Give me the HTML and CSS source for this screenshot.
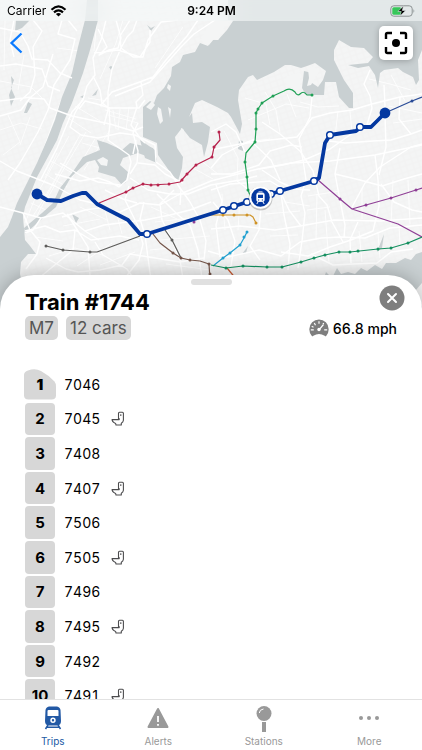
FILE: index.html
```html
<!DOCTYPE html>
<html lang="en">
<head>
<meta charset="utf-8">
<meta name="viewport" content="width=device-width, initial-scale=1">
<title>Train #1744</title>
<link rel="stylesheet" href="styles.css">
</head>
<body>
<svg class="defs" aria-hidden="true">
  <symbol id="toilet" viewBox="0 0 14 15">
    <path d="M7.500 8V2.200Q7.500 1.200 8.500 1.200H11.400Q12.400 1.200 12.400 2.200V9.200Q12.200 11 10.300 12.200V14H5L4.600 12.400Q2.200 11.600 1.600 10M.6 8.600H8.200V7.200M1 8.800Q1.500 10.600 2.600 11.300M9.800 3.300V5" fill="none" stroke="#4c4c4e" stroke-width="1.100" stroke-linejoin="round"/>
  </symbol>
</svg>
<div class="app">
  <section class="map" aria-label="Route map">
    <svg class="map-art" viewBox="0 0 422 320" preserveAspectRatio="xMidYMin slice" aria-hidden="true">
      <defs>
        <pattern id="streets" width="13" height="11" patternUnits="userSpaceOnUse" patternTransform="rotate(-18)">
          <path d="M0 3H13M0 8H13M4 0V11M10 0V11" stroke="#f0f1f1" stroke-width=".7"/>
        </pattern>
      </defs>
      <rect width="422" height="320" fill="#f4f5f5"/>
      <rect width="422" height="320" fill="url(#streets)"/>
      <g class="roads minor">
        <path d="M77 140L45 197 33 216M69 136L36 196 25 223M57 153L45 178M51 161L74 174M45 174L67 187M37 188L55 202M31 203L46 210M86 132L62 172 45 203M95 139L70 181M80 135L50 190 37 216M110 130L84 170M82 143L100 148M5 20L4 70M0 81L31 87 43 99M24 55L18 90M57 48L80 51M0 130L21 123 42 129M8 115L20 142 3 155M30 117L20 145M60 103L42 153M65 104L47 149M68 118L91 133M75 106L100 121M97 20L94 51M123 20L116 43 100 79M88 98L107 101M113 110L116 129M120 109L118 130M129 107L126 130M105 110L136 119M108 115L138 123M183 27L166 52 155 68"/>
        <path d="M245 98L266 104 270 125M248 120L286 104 309 108M265 92L276 110 280 133M287 94L296 117M300 102L318 107 339 106M338 111L335 137M350 111L352 133M391 75L405 101M369 79L390 84 411 90M389 106L422 113M393 123L422 119M308 196L340 191M307 210L330 207M285 202L310 206M222 194L225 230M240 198L238 230M265 214L300 211M270 236L298 235M317 194L316 240M325 210L329 263M362 189L362 219M393 180L391 225M408 180L410 224M359 231L362 262M378 233L380 258M399 225L400 245M246 142L270 139M224 131L238 158 237 181M193 168L213 179M200 160L218 174M104 207L110 230M116 211L122 234M80 207L107 220M63 226L100 219M35 237L63 241M49 256L75 248 103 255M77 266L112 243M100 265L135 252M151 207L188 224M155 222L190 218M160 240L210 236M150 250L170 248M166 264L210 270"/>
      </g>
      <g fill="#c9d0d2">
        <path d="M87 0L85 20 78 47 72 73 62 97 55 120 47 140 37 163 27 183 17 203 12 217 8 227 0 237V320H30L20 274 21 262 28 254 36 254 30 246 25 240 23 217 25 207 37 177 50 153 57 140 63 123 72 103 83 73 90 50 98 20V0Z"/>
        <path d="M228 20L233 21 227 30 218 40 212 40 208 46 200 43 195 52 183 55 180 62 172 67 171 76 164 88 157 95 154 103 150 101 143 107 143 137 157 143 158 155 170 172 178 181 182 168 183 157 177 148 175 137 182 128 190 138 202 145 204 157 208 142 210 127 202 122 193 123 192 113 189 117 195 103 202 100 217 107 228 113 231 117 238 130 240 134 242 124 238 100 239 90 248 77 253 75 257 80 274 72 285 65 291 65 301 68 307 66 315 63 326 71 323 80 318 87 312 83 312 73 304 71 302 88 306 95 314 95 324 95 325 82 336 82 339 97 349 108 353 108 353 93 344 80 334 60 334 50 339 40 351 47 364 48 373 57 368 63 348 65 358 68 369 66 375 75 378 88 380 73 384 70 398 68 403 72 413 77 416 85 419 80 418 60 422 50V0H228Z"/>
        <path d="M44 217L25 234 24 228 42 213 53 203 60 188 72 173 83 157 100 150 97 140 107 143 122 150 130 143 153 148 157 160 138 153 123 158 120 165 128 172 126 182 122 185 115 177 98 172 99 167 95 160 87 162 71 177 63 191 56 207Z"/>
        <path d="M140 140L155 150 157 163 145 158Z M111 66L109 67 111 70 113 67Z M147 25L151 28 155 26 151 31Z M92 96L98 89 96 95Z M80 97L84 95 83 98Z M28 102L32 104 27 113 24 113Z M16 20L24 20 30 20 22 28 15 31Z M11 76L14 80 11 88 15 97 11 106 9 95 12 87Z M72 214L79 218 76 223Z M242 254L248 246 246 253Z M239 140L243 141 243 151 238 149Z M377 252L384 234 382 248Z"/>
        <path d="M320 290L326 272 332 278 337 268 341 274 348 272 355 274 361 268 367 271 375 265 382 269 386 263 396 263 405 258 411 260 416 254 422 252V320H325Z"/>
      </g>
      <g fill="#f4f5f5">
        <path d="M211 20H234L226 24 218 40 214 39 209 45 200 40Z"/>
        <path d="M163 75L166 77 165 84 162 82Z M168 84L171 86 170 91 167 88Z M158 107L161 109 163 121 160 124 157 114Z M152 101L155 105 151 110 146 107Z M181 128L184 130 184 142 180 140Z M168 107L171 109 170 118Z M287 76L300 72 300 89 290 87 285 82Z M308 69L314 66 318 73 311 85 307 86 309 78Z M97 160L103 157 108 160 107 166 101 165Z M408 299L422 283V306Z"/>
      </g>
      <g class="roads">
        <path d="M0 28L20 32 28 46 32 59 48 60 60 73 72 78M14 20L10 40 14 57M33 20L42 31 33 47 35 75 30 92 20 101M62 20L58 34 75 39 70 60 54 85 48 110 38 132 20 163 8 180M0 66L16 64 42 69 48 86 60 91M53 54L43 87 31 97 0 101M0 116L21 110 30 98 44 99 50 108 72 116 110 124 133 131 143 127M68 20L77 31M106 20L101 40 93 58 95 75 87 86 83 100 72 112 57 148 40 181"/>
        <path d="M116 20L121 38 118 48 109 50 99 55 107 47 98 29M130 20L120 36 121 48 133 57 143 57 148 40 161 22 178 20M94 53L118 50 140 57 150 42 150 30M137 20L133 31 127 37 121 48 112 69 108 92 108 110 104 125M198 20L187 36 166 60 153 77 137 83 112 92 100 106M215 20L194 34 181 47 165 65 150 82 130 90 115 96M141 82L143 95 136 102 137 107 131 125 140 138 145 143M145 100L139 108 110 108 97 104 85 101 79 109"/>
        <path d="M93 76L100 90 102 103 109 108 110 124 108 140 129 155 131 162 127 180 119 187 110 182 98 178 80 181 55 174M84 97L75 113 70 127 81 135 98 138 120 133 135 135 155 145 156 162 170 172 181 190 180 205M138 123L133 133 138 151 137 163 130 174M138 163L155 165 165 174 183 183M60 163L80 175 98 182 120 185M0 161L17 171 35 178 55 186 80 200 97 204M0 207L23 213 41 218 63 213 85 231 99 240"/>
        <path d="M23 213L30 230 40 242 37 254 26 269M25 231L45 226 60 232 75 230 91 240 120 236 139 240M41 218L33 230 25 233M46 258L66 269 78 272 100 270 122 265 130 254 149 257 180 262 204 258M67 214L78 231 88 247 90 275M75 230L73 250 56 264 39 278M95 242L103 255 127 269 134 279M130 178L148 190 170 194 188 194 211 185 240 180 257 176"/>
        <path d="M85 231L104 225 128 222 145 220 170 215 190 210 211 202M62 217L85 210 99 208 120 212 140 203 160 205 178 195 211 181 234 175 258 169 291 163 330 161 375 155 422 145M144 202L140 219 145 235 148 258 151 280M174 190L160 204 162 220 172 240 180 260 183 279M178 185L190 202 200 220 206 241 204 260M157 194L177 214 190 225 198 250 202 278M129 186L125 200 138 226 143 244 139 260 125 278"/>
        <path d="M211 190L230 184 246 183 270 181 280 187 284 215 290 244 288 270M211 229L240 226 275 230 300 226 334 220 380 221 422 218M208 251L228 257 259 250 281 256 300 242 321 238 341 237 365 238 390 228 422 225M281 252L308 256 330 247 351 240 373 231 379 206 378 180 375 155M211 150L240 144 270 140 297 137 312 118 330 113 352 110 372 104 400 97 422 94M262 122L280 134 300 151 313 171 319 196 327 205 332 222 343 242M259 169L283 165 304 160 330 149 350 135 363 128 381 116 385 106 384 85"/>
        <path d="M312 97L310 117 299 139 303 160 306 180 301 196 305 213 302 241 298 268M329 141L345 143 373 141 391 140 411 134 422 130M340 148L335 174 340 200 345 225 344 238M351 209L365 183 380 167 411 147 422 144M211 168L222 155 241 145 255 139M211 174L232 174 259 165 270 151 291 145 302 147M216 185L222 201 216 225 220 257M237 181L252 192 261 208 259 230 250 246 260 260M281 193L289 210 301 226M262 170L280 182 295 189 310 190M335 174L360 180 382 186 404 179 422 174"/>
        <path d="M311 254L333 265 354 264 377 263 391 252 413 249M358 222L350 240 351 263M381 184L394 202 412 210 422 212M400 97L399 119 411 134M370 70L364 84 370 96 372 108 366 128M385 115L386 147 379 175M211 132L226 124 236 132 245 152M252 142L271 160 280 180M213 202L228 220 235 241 231 266M136 140L133 154M105 190L123 199 137 203"/>
      </g>
      <g class="line">
        <g stroke="#b7234d"><path d="M99 203L126 192 133 188 143 184 151 185 169 184 180 182 187 174 196 165 212 157 214 147 220 140 219 132"/><path class="stops" d="M126 192h0M133 188h0M143 184h0M151 185h0M158 185h0M169 184h0M182 180h0M187 174h0M196 165h0M212 157h0M214 147h0M219 132h0"/></g>
        <g stroke="#20a056"><path d="M313 95L307 95C304 91 302 92 300 94S296 94 295 92C291 88 287 89 284 91L273 96 262 103 258 109 256 113 256 129 255 142 246 153 245 162 247 177 248 190 251 198"/><path class="stops" d="M312 95h0M273 96h0M262 103h0M258 109h0M256 113h0M256 129h0M255 142h0M245 162h0M247 177h0M248 190h0"/></g>
        <g stroke="#5d5c5a"><path d="M46 246L63 250 90 252 97 252 140 236M165 230L172 240 181 258"/><path class="stops" d="M46 246h0M63 250h0M90 252h0M172 240h0"/></g>
        <g stroke="#75564a"><path d="M153 234L160 243 173 253 181 258 190 260 200 261 209 264 210 280"/><path class="stops" d="M173 253h0M181 258h0M190 260h0M209 264h0M210 274h0"/></g>
        <g stroke="#cf9327"><path d="M208 215L250 215 253 217 256 223"/><path class="stops" d="M223 215h0M234 215h0M247 215h0M256 223h0"/></g>
        <g stroke="#20a0d0"><path d="M247 232L244 238 240 245 230 253 223 258 213 266"/><path class="stops" d="M247 232h0M244 237h0M240 245h0M230 253h0M223 258h0"/></g>
        <g stroke="#8f3f96"><path d="M318 180L340 199 352 209 366 205 391 198 416 190 422 188M352 209L398 224 422 237"/><path class="stops" d="M340 199h0M366 205h0M391 198h0M416 190h0M194 222h0"/></g>
        <g stroke="#c85a32"><path d="M227 268L237 280"/></g>
        <g stroke="#159060"><path d="M211 265L226 268 243 266 267 267 282 267 301 262 314 258 325 255 339 252 350 252 378 249 391 248 408 243 422 237"/><path class="stops" d="M226 268h0M243 266h0M267 267h0M282 267h0M301 262h0M314 258h0M325 255h0M339 252h0M350 252h0M358 251h0M378 249h0M391 248h0M408 243h0"/></g>
        <g stroke="#294b97"><path d="M385 113L412 101 422 97"/><path class="stops" d="M412 101h0"/></g>
      </g>
      <path class="trip" d="M37 194L47 200 61 201 73 196 82 193H86L97 204 128 220 140 234 147 234 223 210 247 202 280 191 314 181 319 178 325 143 330 135 356 131 361 127 371 127 385 113"/>
      <g fill="#0438a0"><circle cx="37" cy="194" r="5.4"/><circle cx="385" cy="113" r="5.4"/></g>
      <g fill="#fff" stroke="#0438a0" stroke-width="1.5"><circle cx="147" cy="234" r="3.3"/><circle cx="223" cy="210" r="3.3"/><circle cx="234" cy="206" r="3.3"/><circle cx="247" cy="202" r="3.3"/><circle cx="271" cy="194" r="3.3"/><circle cx="280" cy="191" r="3.3"/><circle cx="314" cy="181" r="3.3"/><circle cx="330" cy="135" r="3.3"/><circle cx="360" cy="127" r="3.3"/></g>
      <circle cx="260.500" cy="198.500" r="12" fill="#0003"/>
      <circle cx="260.500" cy="197.500" r="11.300" fill="#fff"/>
      <circle cx="260.500" cy="197.500" r="9.300" fill="#0438a0"/>
      <path d="M258.500 191.800H262.500M256.800 194.500Q256.800 193 258 193H263Q264.200 193 264.200 194.500V200Q264.200 201.500 263 201.500H258Q256.800 201.500 256.800 200Z" fill="#fff" stroke="#fff" stroke-width=".8"/>
      <path d="M258 202L256.800 204M263 202L264.200 204" stroke="#fff" stroke-width="1"/>
      <path d="M258 194.800H263V198H258ZM258 199.400H259.200V200.400H258ZM261.800 199.400H263V200.400H261.800Z" fill="#0438a0"/>
    </svg>
    <header class="status">
      <span class="carrier">Carrier
        <svg width="17" height="12" viewBox="0 0 17 12" aria-label="Wi-Fi"><g fill="none" stroke="#000" stroke-width="2.200"><path d="M1.500 4.700Q8.500-1.800 15.500 4.700M4 7.400Q8.500 3.300 13 7.400"/></g><path d="M8.500 11.500L5.900 8.900Q8.500 6.900 11.100 8.900Z"/></svg>
      </span>
      <time>9:24 PM</time>
      <span class="battery"><svg width="26" height="12" viewBox="0 0 26 12" aria-label="Charging"><rect x=".8" y=".8" width="21.400" height="10.400" rx="3" fill="none" stroke="#8b9192"/><rect x="2.300" y="2.300" width="9" height="7.400" rx="1.500" fill="#36c759"/><path d="M23.500 4Q25.200 6 23.500 8Z" fill="#8b9192"/><path d="M13.500 1L7.800 6.500H11.200L10 11 15.700 5.500H12.300Z" stroke="#dfe6e5" stroke-width=".6"/></svg></span>
    </header>
    <div class="map-tools">
      <button class="back" aria-label="Back"><svg width="14" height="22" viewBox="0 0 14 22"><path d="M12.500 1.500L2.500 11 12.500 20.500" fill="none" stroke="#0a7aff" stroke-width="2.300"/></svg></button>
      <button class="locate" aria-label="Center on train"><svg width="24" height="24" viewBox="0 0 24 24"><path d="M2 8V3.500Q2 2 3.500 2H8M16 2H20.500Q22 2 22 3.500V8M22 16V20.500Q22 22 20.500 22H16M8 22H3.500Q2 22 2 20.500V16" fill="none" stroke="#000" stroke-width="2.400"/><circle cx="12" cy="12" r="4"/></svg></button>
    </div>
  </section>
  <main class="sheet">
    <div class="grip"></div>
    <div class="head">
      <h1>Train #1744</h1>
      <button class="close" aria-label="Close"><svg width="26" height="26" viewBox="0 0 26 26"><circle cx="13" cy="13" r="12.500" fill="#7e7e7e"/><path d="M9 9L17 17M17 9L9 17" stroke="#fff" stroke-width="2" stroke-linecap="round"/></svg></button>
    </div>
    <div class="facts">
      <span class="chip">M7</span><span class="chip">12 cars</span>
      <span class="speed"><svg width="20" height="18" viewBox="0 0 20 18" aria-hidden="true"><path d="M3 17.300Q.3 14.300.3 10.200A9.700 9.700 0 0 1 19.700 10.200Q19.700 14.300 17 17.300Q16.300 17.500 15.700 16.800Q10 13.200 4.300 16.800Q3.700 17.500 3 17.300Z" fill="#7e7e7e"/><path d="M10 2.200V4.800M5.300 4L6.500 6.200M14.700 4L13.800 5.600M2.700 7.300L4.500 8.200M1.800 10.800H4.800M15.200 10.800H18.200M10 10.800L14.500 5.500" stroke="#fff" stroke-width="1.200"/><circle cx="10" cy="10.500" r="1.700" fill="#fff"/></svg>66.8 mph</span>
    </div>
    <ol class="cars">
      <li><span class="pos lead"><svg viewBox="0 0 32 32" preserveAspectRatio="none" aria-hidden="true"><path d="M0 6Q0 3 4 1.500Q11-1 17 2Q25 6.500 30.500 13Q32 15 32 18V27Q32 31.500 27.500 31.500H4.500Q0 31.500 0 27Z" fill="#d7d7d7"/></svg><b>1</b></span>7046</li>
      <li><span class="pos">2</span>7045<svg class="wc" aria-label="Restroom"><use href="#toilet"/></svg></li>
      <li><span class="pos">3</span>7408</li>
      <li><span class="pos">4</span>7407<svg class="wc" aria-label="Restroom"><use href="#toilet"/></svg></li>
      <li><span class="pos">5</span>7506</li>
      <li><span class="pos">6</span>7505<svg class="wc" aria-label="Restroom"><use href="#toilet"/></svg></li>
      <li><span class="pos">7</span>7496</li>
      <li><span class="pos">8</span>7495<svg class="wc" aria-label="Restroom"><use href="#toilet"/></svg></li>
      <li><span class="pos">9</span>7492</li>
      <li><span class="pos">10</span>7491<svg class="wc" aria-label="Restroom"><use href="#toilet"/></svg></li>
    </ol>
  </main>
  <nav class="tabs">
    <a class="active" href="#trips"><svg width="28" height="28" viewBox="0 0 28 28" aria-hidden="true"><path fill="currentColor" fill-rule="evenodd" d="M10 2.500H18Q21 3 21.500 6L22 17Q22 21 18.500 21.500H9.500Q6 21 6 17L6.500 6Q7 3 10 2.500ZM8.500 7V12H19.500V7Q19.500 6 18.500 6H9.500Q8.500 6 8.500 7ZM14 13.500A2.700 2.700 0 1 0 14 18.900A2.700 2.700 0 1 0 14 13.500ZM14 15A1.200 1.200 0 1 1 14 17.400A1.200 1.200 0 1 1 14 15Z"/><path d="M9 21L6.500 25M19 21L21.500 25M8 23.300H20" stroke="currentColor" stroke-width="1.500"/></svg>Trips</a>
    <a href="#alerts"><svg width="28" height="28" viewBox="0 0 28 28" aria-hidden="true"><path d="M14 5L23.500 23H4.500Z" fill="currentColor" stroke="currentColor" stroke-width="2" stroke-linejoin="round"/><path d="M14 12V18M14 20V21.700" stroke="#fff" stroke-width="1.800"/></svg>Alerts</a>
    <a href="#stations"><svg width="28" height="28" viewBox="0 0 28 28" aria-hidden="true"><circle cx="14" cy="9.500" r="7.500" fill="currentColor"/><path d="M12 18H16V28H12Z" fill="currentColor"/><path d="M9.300 9Q9.500 5.500 13.500 5" fill="none" stroke="#fff" stroke-width="1"/></svg>Stations</a>
    <a href="#more"><svg width="28" height="28" viewBox="0 0 28 28" aria-hidden="true"><g fill="currentColor"><circle cx="6" cy="14" r="2"/><circle cx="14" cy="14" r="2"/><circle cx="22" cy="14" r="2"/></g></svg>More</a>
  </nav>
</div>
</body>
</html>
```
FILE: styles.css
```css
* { box-sizing: border-box; }
body { margin: 0; background: #fff; color: #000; font-family: Inter, "Liberation Sans", sans-serif; }
button { margin: 0; padding: 0; border: 0; background: none; }
svg { display: block; }
.defs { display: none; }
.app { display: flex; flex-direction: column; height: 100vh; overflow: hidden; }

.map { position: relative; flex: none; height: 320px; background: #f4f5f5; }
.map-art { position: absolute; inset: 0; width: 100%; height: 100%; }
.roads { fill: none; stroke: #fff; stroke-width: 1.4; stroke-linejoin: round; }
.minor { stroke-width: 1; opacity: .8; }
.line { fill: none; stroke-width: 1.2; stroke-linejoin: round; }
.stops { stroke-width: 3; stroke-linecap: round; }
.trip { fill: none; stroke: #0438a0; stroke-width: 3.8; stroke-linejoin: round; }

.status {
  position: relative;
  display: grid; grid-template-columns: 1fr auto 1fr; align-items: center;
  height: 21px; padding: 0 6px 0 7px;
  background: rgba(245, 248, 248, .6); backdrop-filter: blur(12px);
  font-size: 12px;
}
.carrier { display: flex; align-items: center; gap: 4px; }
.status time { font-weight: 600; }
.battery { justify-self: end; }
.map-tools { position: relative; display: flex; justify-content: space-between; padding: 5px 9px 0; }
.back { align-self: flex-start; padding-top: 6px; }
.locate {
  display: grid; place-items: center; width: 34px; height: 34px;
  border-radius: 5px; background: #fff; box-shadow: 0 1px 6px rgba(0, 0, 0, .25);
}

.sheet {
  position: relative; flex: 1; min-height: 0; overflow: hidden;
  margin-top: -45px; padding: 4px 25px 0;
  border-radius: 34px 34px 0 0; background: #fff;
  box-shadow: 0 0 20px rgba(0, 0, 0, .28);
}
.grip { width: 41px; height: 6px; margin: 0 auto; border-radius: 3px; background: #e0e0e0; }
.head { display: flex; justify-content: space-between; height: 31px; margin-right: -8px; }
h1 { margin: 3px 0 0; font-size: 22px; line-height: 28px; font-weight: 700; }
.close { align-self: flex-start; }
.facts { display: flex; gap: 8px; align-items: center; }
.chip { padding: 0 4px; border-radius: 5px; background: #d7d7d7; color: #555; font-size: 17px; line-height: 24px; }
.speed { display: flex; align-items: center; gap: 4px; margin-left: auto; font-size: 14px; font-weight: 500; font-variant-numeric: tabular-nums; }

.cars { display: grid; grid-auto-rows: 1fr; gap: 2px; height: 344px; margin: 28px 0 0; padding: 0; list-style: none; }
.cars li { display: flex; align-items: center; font-size: 14px; font-variant-numeric: tabular-nums; }
.pos {
  display: grid; place-items: center; width: 30px; height: 100%; margin-right: 9px;
  border-radius: 4px; background: #d7d7d7; font-size: 15px; font-weight: 700;
  font-variant-numeric: normal;
}
.lead { grid-template-columns: 100%; background: none; }
.lead svg, .lead b { grid-area: 1 / 1; }
.lead svg { width: 32px; height: 31px; margin: 0 -1px; }
.wc { width: 14px; height: 15px; margin-left: 11px; }

.tabs { position: relative; flex: none; display: grid; grid-template-columns: repeat(4, 1fr); height: 51px; border-top: 1px solid #e2e2e2; background: #fff; }
.tabs a { display: flex; flex-direction: column; align-items: center; gap: 1px; padding-top: 4px; color: #999; font-size: 10px; line-height: 16px; text-decoration: none; }
.tabs .active { color: #2259a5; }
```
